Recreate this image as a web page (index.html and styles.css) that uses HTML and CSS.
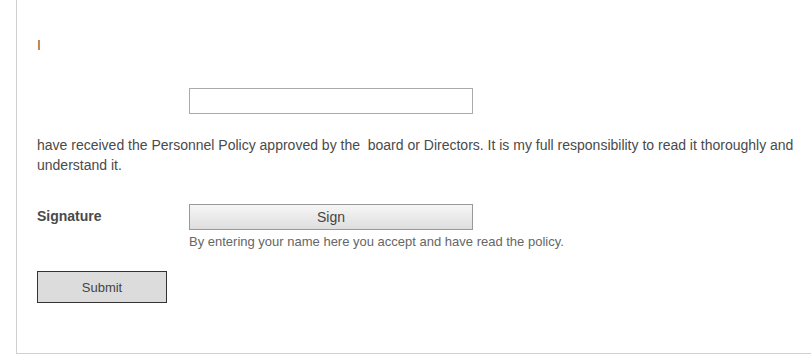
FILE: index.html
```html
<!DOCTYPE html>
<html lang="en">
<head>
  <meta charset="UTF-8" />
  <meta name="viewport" content="width=device-width, initial-scale=1.0"/>
  <title>Personnel Policy Acknowledgement</title>
  <link rel="stylesheet" href="styles.css">
</head>
<body>
  <div class="policy-form">
    <div class="intro">I</div>

    <div class="form-row name-row">
      <label class="row-label" for="fullName"></label>
      <input type="text" id="fullName" class="text-field" />
    </div>

    <p class="statement">have received the Personnel Policy approved by the &nbsp;board or Directors. It is my full responsibility to read it thoroughly and understand it.</p>

    <div class="form-row sign-row">
      <label class="row-label strong">Signature</label>
      <div class="field">
        <button type="button" class="sign-btn">Sign</button>
        <div class="hint">By entering your name here you accept and have read the policy.</div>
      </div>
    </div>

    <button type="button" class="submit-btn">Submit</button>
  </div>
</body>
</html>
```

FILE: styles.css
```css
body {
  margin: 0;
  padding: 0 0 0 16px;
  font-family: "Liberation Sans", Arial, sans-serif;
  font-size: 14px;
  color: #4a4a4a;
  background: #fff;
}

.policy-form {
  border-left: 1px solid #d0d0d0;
  border-bottom: 1px solid #d0d0d0;
  padding: 35px 0 50px 20px;
}

.intro {
  color: #7a5a48;
  line-height: 20px;
}

.form-row {
  display: flex;
}

.row-label {
  width: 152px;
  flex-shrink: 0;
}

.row-label.strong {
  font-weight: bold;
  font-size: 14px;
  line-height: 20px;
  padding-top: 2px;
}

.name-row {
  margin-top: 33px;
}

.text-field {
  width: 284px;
  height: 26px;
  box-sizing: border-box;
  border: 1px solid #aaa;
  margin: 0;
  padding: 2px 4px;
}

.statement {
  margin: 21px 12px 0 0;
  line-height: 20px;
}

.sign-row {
  margin-top: 29px;
}

.sign-btn {
  display: block;
  width: 284px;
  height: 26px;
  border: 1px solid #999;
  background: linear-gradient(#f6f6f6, #dedede);
  font-family: inherit;
  font-size: 14px;
  color: #444;
  padding: 0;
}

.hint {
  color: #666;
  font-size: 13px;
  line-height: 16px;
  margin-top: 4px;
}

.submit-btn {
  display: block;
  margin-top: 21px;
  width: 130px;
  height: 32px;
  background: #dcdcdc;
  border: 1px solid #333;
  font-family: inherit;
  font-size: 13px;
  color: #444;
  padding: 0;
}
```
